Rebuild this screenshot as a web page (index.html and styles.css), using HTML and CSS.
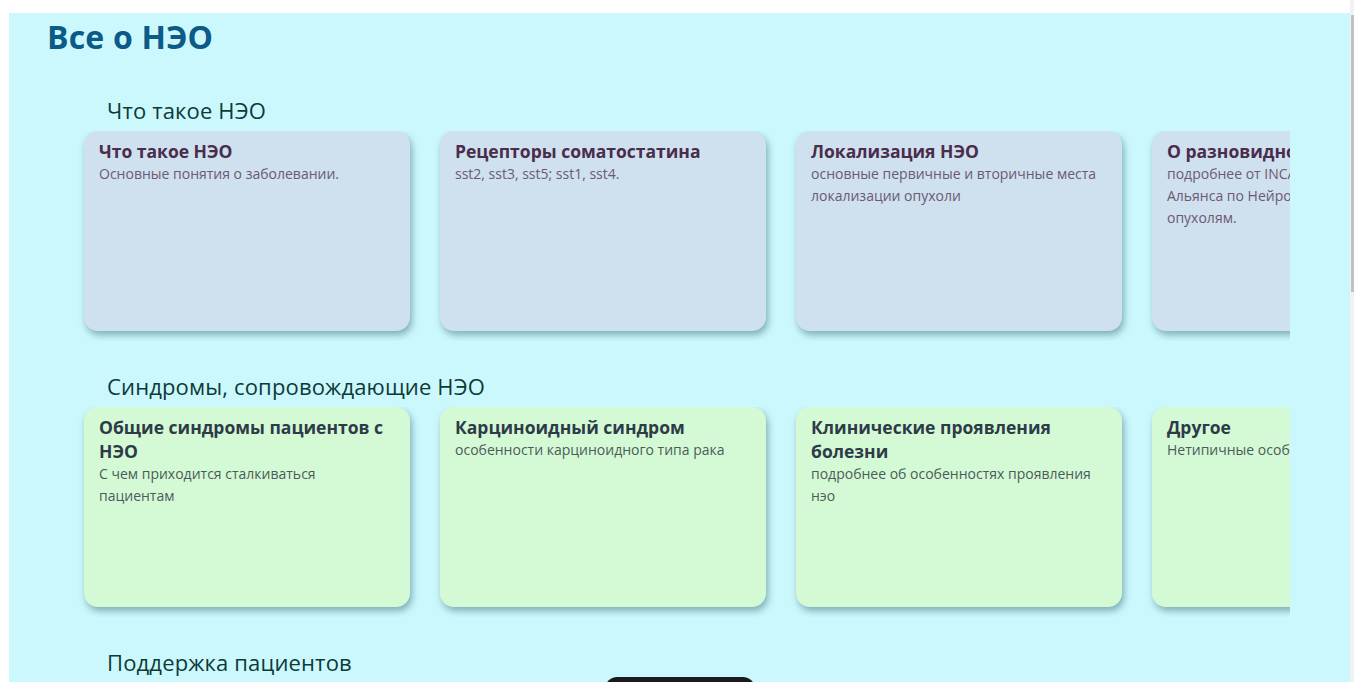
FILE: index.html
```html
<!DOCTYPE html>
<html lang="ru">
<head>
<meta charset="utf-8">
<title>Все о НЭО</title>
<link rel="stylesheet" href="styles.css">
</head>
<body>
<main class="page">
  <h1 class="page-title">Все о НЭО</h1>

  <section class="topic">
    <h2 class="topic-title">Что такое НЭО</h2>
    <div class="card-row">
      <a class="card card--blue" href="#">
        <h3 class="card-title">Что такое НЭО</h3>
        <p class="card-text">Основные понятия о заболевании.</p>
      </a>
      <a class="card card--blue" href="#">
        <h3 class="card-title">Рецепторы соматостатина</h3>
        <p class="card-text">sst2, sst3, sst5; sst1, sst4.</p>
      </a>
      <a class="card card--blue" href="#">
        <h3 class="card-title">Локализация НЭО</h3>
        <p class="card-text">основные первичные и вторичные места локализации опухоли</p>
      </a>
      <a class="card card--blue" href="#">
        <h3 class="card-title">О разновидностях НЭО</h3>
        <p class="card-text">подробнее от INCA – Международного Альянса по Нейроэндокринным опухолям.</p>
      </a>
    </div>
  </section>

  <section class="topic">
    <h2 class="topic-title">Синдромы, сопровождающие НЭО</h2>
    <div class="card-row">
      <a class="card card--green" href="#">
        <h3 class="card-title">Общие синдромы пациентов с НЭО</h3>
        <p class="card-text">С чем приходится сталкиваться пациентам</p>
      </a>
      <a class="card card--green" href="#">
        <h3 class="card-title">Карциноидный синдром</h3>
        <p class="card-text">особенности карциноидного типа рака</p>
      </a>
      <a class="card card--green" href="#">
        <h3 class="card-title">Клинические проявления болезни</h3>
        <p class="card-text">подробнее об особенностях проявления нэо</p>
      </a>
      <a class="card card--green" href="#">
        <h3 class="card-title">Другое</h3>
        <p class="card-text">Нетипичные особенности</p>
      </a>
    </div>
  </section>

  <section class="topic">
    <h2 class="topic-title">Поддержка пациентов</h2>
    <div class="card-row">
      <a class="card card--yellow" href="#">
        <h3 class="card-title">Фонды и организации</h3>
        <p class="card-text">куда можно обратиться за помощью</p>
      </a>
      <a class="card card--yellow" href="#">
        <h3 class="card-title">Истории пациентов</h3>
        <p class="card-text">опыт людей, живущих с НЭО</p>
      </a>
      <a class="card card--yellow" href="#">
        <h3 class="card-title">Вопросы врачу</h3>
        <p class="card-text">что стоит спросить на приёме</p>
      </a>
      <a class="card card--yellow" href="#">
        <h3 class="card-title">Полезные ссылки</h3>
        <p class="card-text">материалы для пациентов и близких</p>
      </a>
    </div>
  </section>
</main>

<div class="dock"></div>
<div class="scroll-rail"><div class="scroll-thumb"></div></div>
</body>
</html>
```

FILE: styles.css
```css
html {
  background: #ffffff;
  scrollbar-width: none;
}

html::-webkit-scrollbar {
  display: none;
}

body {
  margin: 0;
  background: #ffffff;
  font-family: "Open Sans", "Noto Sans", sans-serif;
}

.page {
  margin: 13px 4px 0 9px;
  padding: 4px 0 760px 38px;
  background: #cbf8fc;
}

.page-title {
  margin: 0 0 39px;
  font-size: 32px;
  line-height: 40px;
  font-weight: 700;
  color: #0b5a87;
  letter-spacing: 0.2px;
}

.topic {
  margin: 0 60px 0 29px;
}

.topic + .topic {
  margin-top: 31px;
}

.topic-title {
  margin: 0 0 7px 31px;
  font-size: 22px;
  line-height: 28px;
  font-weight: 400;
  color: #0d3a38;
  letter-spacing: 0.15px;
}

.card-row {
  display: flex;
  gap: 30px;
  padding: 0 0 10px 8px;
  overflow: hidden;
}

.card {
  flex: 0 0 326px;
  box-sizing: border-box;
  height: 200px;
  padding: 8px 22px 0 15px;
  border-radius: 14px;
  box-shadow: 2px 4px 7px rgba(52, 104, 118, 0.5);
  text-decoration: none;
}

.card-title {
  margin: 0;
  font-size: 17.5px;
  line-height: 24px;
  font-weight: 700;
}

.card-text {
  margin: 0;
  font-size: 14px;
  line-height: 22px;
}

.card--blue {
  background: #cfe0ef;
}

.card--blue .card-title {
  color: #4a2c4b;
}

.card--blue .card-text {
  color: #6b5a72;
}

.card--green {
  background: #d3fad5;
}

.card--green .card-title {
  color: #2f3a48;
}

.card--green .card-text {
  color: #4d5a5a;
}

.card--yellow {
  background: #f6f3cf;
}

.card--yellow .card-title {
  color: #4a3d22;
}

.card--yellow .card-text {
  color: #6a604a;
}

/* floating bar peeking from the bottom edge */
.dock {
  position: fixed;
  left: 605px;
  bottom: -35px;
  width: 150px;
  height: 40px;
  border-radius: 12px 12px 0 0;
  background: #1b1b1d;
}

/* slim page scrollbar */
.scroll-rail {
  position: fixed;
  top: 0;
  right: 0;
  width: 4px;
  height: 100%;
  background: #f1f1f1;
}

.scroll-thumb {
  margin: 15px 0 0 1px;
  width: 3px;
  height: 277px;
  background: #c1c1c1;
}
```
